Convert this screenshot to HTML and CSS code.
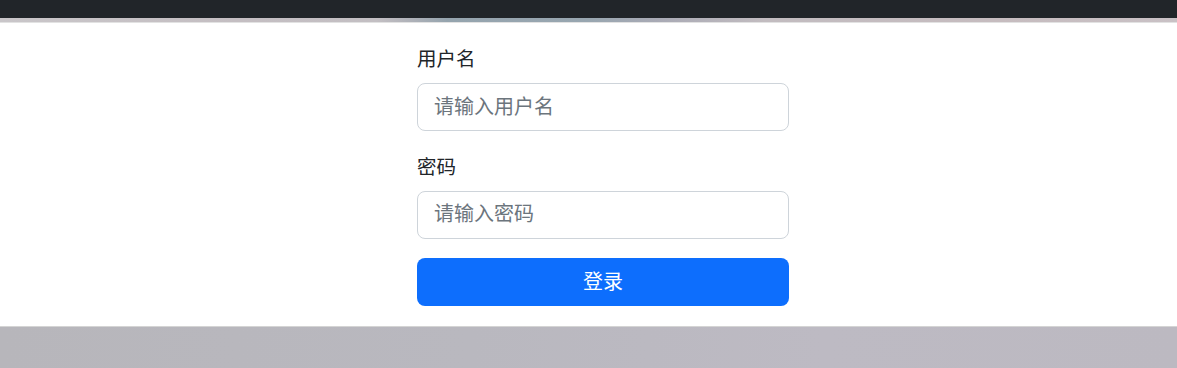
FILE: index.html
```html
<!DOCTYPE html>
<html lang="zh-CN">
<head>
  <meta charset="UTF-8">
  <meta name="viewport" content="width=device-width, initial-scale=1.0">
  <title>登录</title>
  <link rel="stylesheet" href="styles.css">
</head>

<body>
  <div class="topbar"></div>
  <div class="backdrop-strip"></div>

  <div class="panel">
    <form class="login-form">
      <div class="form-group">
        <label for="username">用户名</label>
        <input type="text" id="username" name="username" placeholder="请输入用户名">
      </div>

      <div class="form-group">
        <label for="password">密码</label>
        <input type="password" id="password" name="password" placeholder="请输入密码">
      </div>

      <button type="submit" class="btn">登录</button>
    </form>
  </div>
</body>
</html>
```

FILE: styles.css
```css
body {
  font-family: 'Noto Sans CJK SC', 'Liberation Sans', sans-serif;
  margin: 0;
  padding: 0;
  height: 368px;
  overflow: hidden;
  background: linear-gradient(90deg, #b7b6bb 0%, #b9b8bf 40%, #bdbac3 70%, #bcb9c1 100%);
}

.topbar {
  height: 18px;
  background-color: #212529;
}

.backdrop-strip {
  height: 4px;
  background: linear-gradient(90deg, #c9c6c9 0%, #c4bec2 20%, #c3bfc3 32%, #aeb1b8 35%, #95a4ae 38%, #98a6b0 50%, #a9aab5 56%, #c2bcc0 65%, #c6bcbf 85%, #c9c1c5 100%);
}

.panel {
  background: #ffffff;
  border-top: 1px solid #e2e2e2;
  border-bottom: 1px solid #d4d4d4;
  padding: 20px 0 20px;
}

.login-form {
  width: 372px;
  margin-left: 417px;
}

.form-group {
  margin-bottom: 19.5px;
}

.form-group label {
  display: block;
  margin-bottom: 10px;
  font-size: 19.5px;
  line-height: 30px;
  color: #212529;
}

.form-group input {
  display: block;
  box-sizing: border-box;
  width: 100%;
  height: 48px;
  padding: 6px 16px 10px;
  font-family: inherit;
  font-size: 20px;
  line-height: 30px;
  color: #212529;
  border: 1px solid #ced4da;
  border-radius: 8px;
  outline: none;
}

.form-group input::placeholder {
  color: #6c757d;
}

.btn {
  display: block;
  width: 100%;
  height: 48px;
  padding: 0 0 4px;
  background-color: #0d6efd;
  color: #ffffff;
  font-family: inherit;
  font-size: 20px;
  border: none;
  border-radius: 8px;
  cursor: pointer;
}

.btn:hover {
  background-color: #0b5ed7;
}
```
